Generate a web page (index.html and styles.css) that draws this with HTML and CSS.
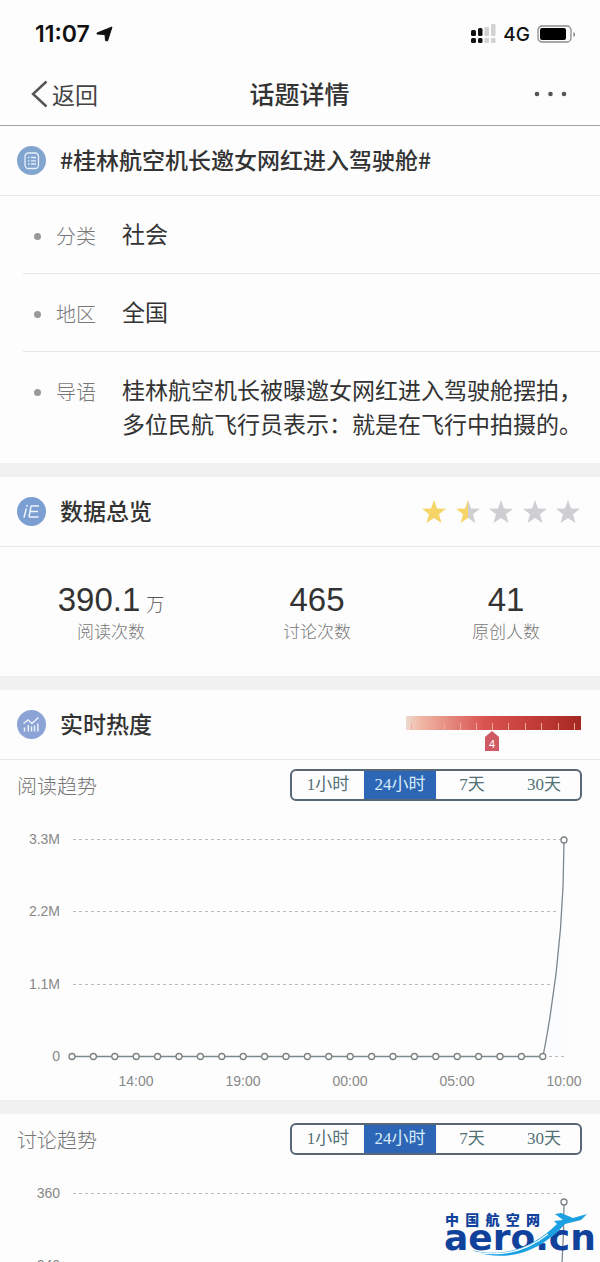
FILE: index.html
```html
<!DOCTYPE html>
<html lang="zh-CN">
<head>
<meta charset="utf-8">
<meta name="viewport" content="width=device-width, initial-scale=1">
<title>话题详情</title>
<link rel="stylesheet" href="styles.css">
</head>
<body>
<div class="screen">
  <div class="status">
    <span class="time">11:07</span>
    <svg class="loc" width="17" height="16" viewBox="0 0 17 16"><path d="M16 1 11.500 15 9.500 14.500 9 8.500 1 8 1 7z" fill="#111" stroke="#111" stroke-linejoin="round"/></svg>
    <span class="status-right">
      <svg width="25" height="20" viewBox="0 0 25 20">
        <g fill="#111"><rect x="0" y="6" width="5" height="6" rx="1.500"/><rect x="7" y="4" width="4.500" height="8" rx="1.500"/><rect x="0" y="14" width="5" height="5" rx="1.500"/><rect x="7" y="14" width="4.500" height="5" rx="1.500"/></g>
        <g fill="#d2d2d2"><rect x="13.500" y="3" width="4.500" height="9" rx="1"/><rect x="20" y="0" width="4.500" height="12" rx="1"/><rect x="13.500" y="14" width="4.500" height="5" rx="1"/><rect x="20" y="14" width="4.500" height="5" rx="1"/></g>
      </svg>
      <span class="net">4G</span>
      <svg width="39" height="18" viewBox="0 0 39 18"><rect x="1" y="1" width="33" height="16" rx="4" fill="none" stroke="#8c8c8c" stroke-width="1.300"/><rect x="3" y="3" width="26" height="12" rx="2" fill="#000"/><path d="M36.500 7v5c2-1 2-4 0-5" fill="#777"/></svg>
    </span>
  </div>
  <header class="nav">
    <button class="back" type="button"><svg width="17" height="28" viewBox="0 0 17 28"><path d="M15.500 1.500 2 14l13.500 12.500" fill="none" stroke="#555" stroke-width="2.400"/></svg>返回</button>
    <h1>话题详情</h1>
    <button class="more" type="button" aria-label="更多"><svg width="34" height="6" viewBox="0 0 34 6" fill="#555"><circle cx="3" cy="3" r="2.300"/><circle cx="16.500" cy="3" r="2.300"/><circle cx="30" cy="3" r="2.300"/></svg></button>
  </header>

  <main>
    <section>
      <div class="head">
        <svg class="badge" viewBox="0 0 29 29"><circle cx="14.500" cy="14.500" r="14.500" fill="#82a5d0"/><g fill="none" stroke="#e6f0fb" stroke-width="1.300"><rect x="8" y="7" width="13.500" height="15.500" rx="3.500"/><path d="M11 11.500h1.500M14 11.500h5M11 14.800h1.500M14 14.800h5M11 18h1.500M14 18h5"/></g></svg>
        <h2>#桂林航空机长邀女网红进入驾驶舱#</h2>
      </div>
      <dl class="facts">
        <div class="fact"><dt>分类</dt><dd>社会</dd></div>
        <div class="fact"><dt>地区</dt><dd>全国</dd></div>
        <div class="fact"><dt>导语</dt><dd>桂林航空机长被曝邀女网红进入驾驶舱摆拍，<br>多位民航飞行员表示：就是在飞行中拍摄的。</dd></div>
      </dl>
    </section>

    <section>
      <div class="head">
        <svg class="badge" viewBox="0 0 29 29"><circle cx="14.500" cy="14.500" r="14.500" fill="#7b9fd2"/><path d="M10.300 8 9.800 9.800M9.300 11.500 7 20.500M14 9h8M13 14.500h8M12 20h9.500M14 9 12 20" fill="none" stroke="#eef4fc" stroke-width="1.500"/></svg>
        <h2>数据总览</h2>
        <svg class="stars" width="160" height="26" viewBox="0 0 160 26" role="img" aria-label="1.5 星">
          <defs>
            <path id="star" d="M13 1 16 9.500 25 9.800 18 15.200 20.500 24 13 19 5.500 24 8 15.200 1 9.800 10 9.500z"/>
            <linearGradient id="half"><stop offset=".5" stop-color="#f6d568"/><stop offset=".5" stop-color="#cfcfd3"/></linearGradient>
          </defs>
          <use href="#star" fill="#f6d568"/><use href="#star" x="34" fill="url(#half)"/><use href="#star" x="67" fill="#cfcfd3"/><use href="#star" x="101" fill="#cfcfd3"/><use href="#star" x="134" fill="#cfcfd3"/>
        </svg>
      </div>
      <div class="stats">
        <div class="stat"><div class="num">390.1<small>万</small></div><div class="cap">阅读次数</div></div>
        <div class="stat"><div class="num">465</div><div class="cap">讨论次数</div></div>
        <div class="stat"><div class="num">41</div><div class="cap">原创人数</div></div>
      </div>
    </section>

    <section>
      <div class="head">
        <svg class="badge" viewBox="0 0 29 29"><circle cx="14.500" cy="14.500" r="14.500" fill="#8ba3d5"/><path d="M7.500 21.500v-4M11.300 21.500v-6.500M14.500 21.500v-5M17.500 21.500v-6M20.800 21.500v-8M6.500 13.500 11 10l4 3.500 6.500-6" fill="none" stroke="#eaf1fb" stroke-width="1.500"/></svg>
        <h2>实时热度</h2>
        <svg class="heat" width="176" height="38" viewBox="0 0 176 38">
          <defs><linearGradient id="heat"><stop offset="0" stop-color="#eed9d0"/><stop offset=".08" stop-color="#f0b8a6"/><stop offset=".45" stop-color="#d95350"/><stop offset=".7" stop-color="#c53f3c"/><stop offset="1" stop-color="#a62823"/></linearGradient></defs>
          <rect x="1" y="1" width="175" height="14" fill="url(#heat)"/>
          <path d="M6.500 8v7M22.500 8v7M39.500 8v7M55.500 8v7M71.500 8v7M87.500 8v7M103.500 8v7M120.500 8v7M136.500 8v7M153.500 8v7M169.500 8v7" stroke="#f2aaa0"/>
          <path d="M80 22 87 16 94 22V36H80z" fill="#d05a64"/>
          <text x="87" y="33" class="heat-num">4</text>
        </svg>
      </div>
      <div class="trend">
        <h3>阅读趋势</h3>
        <div class="seg"><button type="button">1小时</button><button type="button" class="on" aria-pressed="true">24小时</button><button type="button">7天</button><button type="button">30天</button></div>
      </div>
      <svg class="chart" viewBox="0 0 600 290">
        <g class="grid"><path d="M73 29.500H562M73 101.500H557M73 174.500H551M543 246.500H564"/></g>
        <g class="ylab"><text x="60" y="34">3.3M</text><text x="60" y="106">2.2M</text><text x="60" y="179">1.1M</text><text x="60" y="251">0</text></g>
        <g class="xlab"><text x="136" y="276">14:00</text><text x="243" y="276">19:00</text><text x="350" y="276">00:00</text><text x="457" y="276">05:00</text><text x="564" y="276">10:00</text></g>
        <path class="area" d="M543 246C555 185 564 110 564 30V246z"/>
        <path class="line" d="M72 246.500H543C555 185 564 110 564 30"/>
        <g class="dots"><circle cx="72" cy="246.500" r="3"/><circle cx="93.400" cy="246.500" r="3"/><circle cx="114.800" cy="246.500" r="3"/><circle cx="136.200" cy="246.500" r="3"/><circle cx="157.600" cy="246.500" r="3"/><circle cx="179" cy="246.500" r="3"/><circle cx="200.400" cy="246.500" r="3"/><circle cx="221.800" cy="246.500" r="3"/><circle cx="243.200" cy="246.500" r="3"/><circle cx="264.600" cy="246.500" r="3"/><circle cx="286" cy="246.500" r="3"/><circle cx="307.400" cy="246.500" r="3"/><circle cx="328.800" cy="246.500" r="3"/><circle cx="350.200" cy="246.500" r="3"/><circle cx="371.600" cy="246.500" r="3"/><circle cx="393" cy="246.500" r="3"/><circle cx="414.400" cy="246.500" r="3"/><circle cx="435.800" cy="246.500" r="3"/><circle cx="457.200" cy="246.500" r="3"/><circle cx="478.600" cy="246.500" r="3"/><circle cx="500" cy="246.500" r="3"/><circle cx="521.400" cy="246.500" r="3"/><circle cx="542.800" cy="246.500" r="3"/><circle cx="564" cy="30" r="3"/></g>
      </svg>
    </section>

    <section>
      <div class="trend">
        <h3>讨论趋势</h3>
        <div class="seg"><button type="button">1小时</button><button type="button" class="on" aria-pressed="true">24小时</button><button type="button">7天</button><button type="button">30天</button></div>
      </div>
      <svg class="chart" viewBox="0 0 600 290">
        <g class="grid"><path d="M73 29.500H562M73 101.500H557"/></g>
        <g class="ylab"><text x="60" y="34">360</text><text x="60" y="106">240</text></g>
        <path class="line" d="M564 38C564 80 561 150 543 246"/>
        <g class="dots"><circle cx="564" cy="38" r="3"/></g>
      </svg>
    </section>
  </main>

  <div class="watermark">
    <div class="mark-cn"><span>中</span><span>国</span><span>航</span><span>空</span><span>网</span></div>
    <div class="mark-en">aero.cn</div>
    <svg class="swoosh" viewBox="0 0 156 48"><path d="M28 39C58 49 90 39 115 15L121 16C95 43 60 54 28 39z" fill="#fff"/><path d="M29 40C60 48 90 39 115 14L112 11 121 10 113 4 119 3 131 8 145 4 139 10 123 14C98 42 64 54 29 40z" fill="#1ba0e2"/><path d="M36 42.500C64 47 86 40 106 24" fill="none" stroke="#fff" stroke-width="1.200"/></svg>
  </div>
</div>
</body>
</html>
```
FILE: styles.css
```css
* { box-sizing: border-box; }
body { margin: 0; background: #fdfdfd; color: #333; font-family: "Liberation Sans", "Noto Sans CJK SC", sans-serif; }
h1, h2, h3, dl, dd { margin: 0; font-weight: 500; }
button { border: 0; padding: 0; background: none; color: inherit; font: inherit; }
svg { display: block; flex: none; }
.screen { position: relative; height: 100vh; overflow: hidden; }

.status { display: flex; align-items: center; height: 62px; padding: 6px 24px 0 35px; color: #111; font-family: Inter, sans-serif; }
.time { font-size: 23px; font-weight: 600; }
.loc { margin-left: 6px; }
.status-right { display: flex; align-items: center; gap: 7px; margin-left: auto; }
.net { font-size: 19px; font-weight: 500; }

.nav { display: grid; grid-template-columns: 1fr auto 1fr; align-items: center; height: 64px; padding: 0 32px 0 31px; border-bottom: 1px solid #a3a1a3; font-family: "Noto Sans CJK SC", sans-serif; }
.nav h1 { padding-bottom: 2px; font-size: 25px; line-height: 36px; }
.back { display: flex; align-items: center; gap: 4px; font-size: 23px; color: #444; }
.more { justify-self: end; }

section + section { border-top: 14px solid #f1f1f2; }
.head { display: flex; align-items: center; height: 70px; padding: 0 19px 0 17px; border-bottom: 1px solid #e8e8ea; }
.badge { width: 29px; height: 29px; margin-right: 14px; }
.head h2 { padding-bottom: 4px; font-size: 23px; line-height: 34px; font-family: "Noto Sans CJK SC", sans-serif; }
.stars { margin-left: auto; }
.heat { margin: 18px 0 0 auto; }
.heat-num { fill: #fff; font-size: 11px; text-anchor: middle; }

.facts { padding: 0 0 6px 23px; font-family: "Noto Sans CJK SC", sans-serif; }
.fact { display: flex; align-items: flex-start; padding: 20px 0 17px 11px; border-bottom: 1px solid #e6e6e8; }
.fact:last-child { border-bottom: 0; }
.fact dt { display: flex; align-items: center; flex: none; width: 88px; font-size: 20px; line-height: 40px; font-weight: 300; color: #777; }
.fact dt::before { content: ""; width: 7px; height: 7px; margin-right: 15px; border-radius: 50%; background: #999; }
.fact dd { font-size: 23px; line-height: 34px; font-weight: 400; }

.stats { display: grid; grid-template-columns: 222fr 190fr 188fr; padding: 31px 0 32px; text-align: center; }
.num { font-size: 33px; line-height: 44px; }
.num small { margin-left: 6px; font-size: 18px; line-height: 1; font-weight: 300; color: #555; }
.cap { font-size: 17px; line-height: 22px; font-weight: 300; color: #777; }

.trend { display: flex; justify-content: space-between; align-items: center; height: 50px; padding: 0 18px 0 17px; }
.trend h3 { font-size: 20px; font-weight: 300; color: #777; font-family: "Noto Sans CJK SC", sans-serif; }
.seg { display: grid; grid-template-columns: repeat(4, 1fr); width: 292px; height: 32px; overflow: hidden; border: 2px solid #596674; border-radius: 6px; }
.seg button { font: 17px/28px "Liberation Serif", "Noto Sans CJK SC", serif; color: #527176; }
.seg .on { background: #2d66b5; color: #d8edfa; }

.chart { width: 100%; height: auto; font-size: 14px; fill: #888; }
.grid { stroke: #bbb; stroke-dasharray: 3 3; }
.ylab { text-anchor: end; }
.xlab { text-anchor: middle; }
.line { fill: none; stroke: #7c878e; stroke-width: 1.3px; }
.area { fill: #fafcfe; }
.dots { fill: #fff; stroke: #7b8182; stroke-width: 1.3px; }

.watermark { position: absolute; right: 2px; bottom: 4px; width: 156px; height: 48px; color: #10429c; }
.mark-cn { display: flex; justify-content: space-between; width: 95px; margin-left: 3px; font: 900 14px/18px "Noto Sans CJK SC", sans-serif; }
.mark-en { padding-left: 2px; font: 700 36px/20px "DejaVu Sans", sans-serif; }
.swoosh { position: absolute; left: 0; top: 0; width: 156px; height: 48px; }
```
